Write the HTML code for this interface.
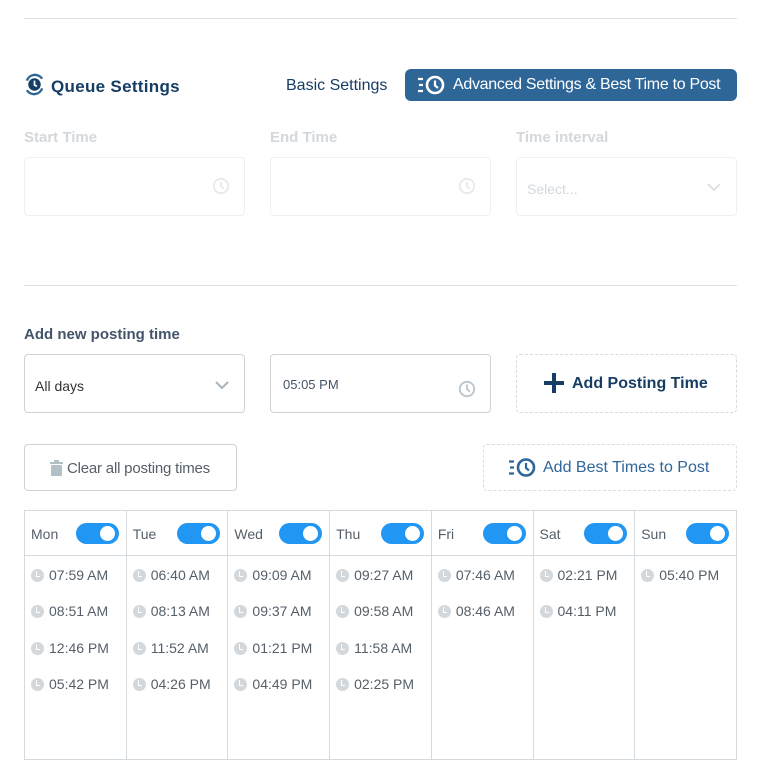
<!DOCTYPE html>
<html><head><style>
*{box-sizing:border-box;margin:0;padding:0}
body{width:760px;height:775px;background:#fff;font-family:"Liberation Sans",sans-serif;position:relative;overflow:hidden;color:#44546a}
.a{position:absolute}
.hr{position:absolute;left:24px;width:713px;height:1px;background:#dde1e5}
.lbl{position:absolute;font-size:15px;color:#d3d8dc;font-weight:bold}
.inp{position:absolute;border:1px solid #eef0f2;border-radius:4px;height:59px;width:221px;top:157px}
.clk{position:absolute;width:18px;height:18px}
table{position:absolute;left:24px;top:510px;width:713px;border-collapse:collapse}
td{border:1px solid #d5dade;vertical-align:top;width:102px;font-size:14px;color:#555f69}
.h{height:45px;position:relative}
.h span{position:absolute;left:6px;top:15px}
.tg{position:absolute;right:7px;top:12px;width:43px;height:21px;border-radius:11px;background:#2196f3}
.tg:after{content:"";position:absolute;right:4px;top:3px;width:15px;height:15px;border-radius:50%;background:#fff}
.b{height:204px;padding-top:11px}
.t{height:36.4px;padding-left:6px;display:flex;align-items:flex-start;gap:5px}
.t i{display:inline-block;width:13px;height:13px;border-radius:50%;background:#d3d8dc;position:relative;margin-top:2px}
.t i:after{content:"";position:absolute;left:5px;top:2px;width:3px;height:5px;border-left:1.5px solid #fff;border-bottom:1.5px solid #fff}
</style></head><body>
<div class="hr" style="top:18px"></div>
<svg class="a" style="left:23px;top:73px" width="23" height="23" viewBox="0 0 24 24"><path d="M4 8A9 9 0 0 1 20 6" stroke="#2e6698" stroke-width="2.5" fill="none"/><path d="M20 16A9 9 0 0 1 4 18" stroke="#2e6698" stroke-width="2.5" fill="none"/><circle cx="12" cy="12" r="6.5" fill="#163d63"/><path d="M12 8v4.5l2.5 1.5" stroke="#fff" stroke-width="1.8" fill="none"/></svg>
<div class="a" style="left:51px;top:77px;font-size:17px;font-weight:bold;color:#163d63;letter-spacing:0.3px">Queue Settings</div>
<div class="a" style="left:286px;top:77px;font-size:16px;color:#163d63">Basic Settings</div>
<div class="a" style="left:405px;top:69px;width:332px;height:32px;border-radius:6px;background:#2e6698;color:#fff;font-size:16px;padding:7px 0 0 48px;letter-spacing:-0.3px;white-space:nowrap">Advanced Settings &amp; Best Time to Post</div>
<svg class="a" style="left:418px;top:75px" width="28" height="20" viewBox="0 0 28 20"><path d="M0 4h5M1 10h4M0 16h5" stroke="#fff" stroke-width="2.2"/><circle cx="17" cy="10" r="8" stroke="#fff" stroke-width="2.6" fill="none"/><path d="M17 5.5v5l3 2.5" stroke="#fff" stroke-width="2.2" fill="none"/></svg>
<div class="lbl" style="left:24px;top:129px">Start Time</div>
<div class="lbl" style="left:270px;top:129px">End Time</div>
<div class="lbl" style="left:516px;top:129px">Time interval</div>
<div class="inp" style="left:24px"></div>
<div class="inp" style="left:270px"></div>
<div class="inp" style="left:516px"><span class="a" style="left:10px;top:23px;font-size:14px;color:#d3d8dc">Select...</span><svg class="a" style="left:189px;top:24px" width="16" height="10"><path d="M2 2l6 6 6-6" stroke="#dde1e5" stroke-width="2" fill="none"/></svg></div>
<svg class="clk" style="left:212px;top:177px" viewBox="0 0 20 20"><circle cx="10" cy="10" r="8" stroke="#e6e9ec" stroke-width="2" fill="none"/><path d="M10 5v5l3 3" stroke="#e6e9ec" stroke-width="2" fill="none"/></svg>
<svg class="clk" style="left:458px;top:177px" viewBox="0 0 20 20"><circle cx="10" cy="10" r="8" stroke="#e6e9ec" stroke-width="2" fill="none"/><path d="M10 5v5l3 3" stroke="#e6e9ec" stroke-width="2" fill="none"/></svg>
<div class="hr" style="top:285px"></div>
<div class="a" style="left:24px;top:326px;font-size:15px;font-weight:bold;color:#44546a">Add new posting time</div>
<div class="a" style="left:24px;top:354px;width:221px;height:59px;border:1px solid #ccd3d9;border-radius:4px"><span class="a" style="left:10px;top:23px;font-size:14px;color:#333">All days</span><svg class="a" style="left:189px;top:25px" width="16" height="10"><path d="M2 2l6 6 6-6" stroke="#aab4bd" stroke-width="2" fill="none"/></svg></div>
<div class="a" style="left:270px;top:354px;width:221px;height:59px;border:1px solid #ccd3d9;border-radius:4px"><span class="a" style="left:12px;top:22px;font-size:13px;color:#44546a">05:05 PM</span></div>
<svg class="clk" style="left:458px;top:380px" viewBox="0 0 20 20"><circle cx="10" cy="10" r="8" stroke="#b8c4cc" stroke-width="2" fill="none"/><path d="M10 5v5l3 3" stroke="#b8c4cc" stroke-width="2" fill="none"/></svg>
<div class="a" style="left:516px;top:354px;width:221px;height:59px;border:1px dashed #d5dade;border-radius:4px"></div>
<svg class="a" style="left:543px;top:372px" width="22" height="22"><path d="M11 1v20M1 11h20" stroke="#163d63" stroke-width="4"/></svg>
<div class="a" style="left:572px;top:375px;font-size:16px;font-weight:bold;color:#163d63">Add Posting Time</div>
<div class="a" style="left:24px;top:444px;width:213px;height:47px;border:1px solid #ccd3d9;border-radius:4px"></div>
<svg class="a" style="left:50px;top:460px" width="13" height="16"><rect x="0" y="2" width="13" height="2" fill="#b4c0c8"/><rect x="4" y="0" width="5" height="2" fill="#b4c0c8"/><rect x="1" y="5" width="11" height="11" rx="1" fill="#b4c0c8"/></svg>
<div class="a" style="left:67px;top:460px;font-size:15px;color:#555f69;letter-spacing:-0.2px">Clear all posting times</div>
<div class="a" style="left:483px;top:444px;width:254px;height:47px;border:1px dashed #d5dde6;border-radius:4px"></div>
<svg class="a" style="left:509px;top:457px" width="28" height="21" viewBox="0 0 28 20"><path d="M0 4h5M1 10h4M0 16h5" stroke="#2e6698" stroke-width="2.2"/><circle cx="17" cy="10" r="8" stroke="#2e6698" stroke-width="2.6" fill="none"/><path d="M17 5.5v5l3 2.5" stroke="#2e6698" stroke-width="2.2" fill="none"/></svg>
<div class="a" style="left:543px;top:459px;font-size:16px;color:#2e6698">Add Best Times to Post</div>
<table><tr>
<td class="h"><span>Mon</span><div class="tg"></div></td>
<td class="h"><span>Tue</span><div class="tg"></div></td>
<td class="h"><span>Wed</span><div class="tg"></div></td>
<td class="h"><span>Thu</span><div class="tg"></div></td>
<td class="h"><span>Fri</span><div class="tg"></div></td>
<td class="h"><span>Sat</span><div class="tg"></div></td>
<td class="h"><span>Sun</span><div class="tg"></div></td>
</tr><tr>
<td class="b"><div class="t"><i></i>07:59 AM</div><div class="t"><i></i>08:51 AM</div><div class="t"><i></i>12:46 PM</div><div class="t"><i></i>05:42 PM</div></td>
<td class="b"><div class="t"><i></i>06:40 AM</div><div class="t"><i></i>08:13 AM</div><div class="t"><i></i>11:52 AM</div><div class="t"><i></i>04:26 PM</div></td>
<td class="b"><div class="t"><i></i>09:09 AM</div><div class="t"><i></i>09:37 AM</div><div class="t"><i></i>01:21 PM</div><div class="t"><i></i>04:49 PM</div></td>
<td class="b"><div class="t"><i></i>09:27 AM</div><div class="t"><i></i>09:58 AM</div><div class="t"><i></i>11:58 AM</div><div class="t"><i></i>02:25 PM</div></td>
<td class="b"><div class="t"><i></i>07:46 AM</div><div class="t"><i></i>08:46 AM</div></td>
<td class="b"><div class="t"><i></i>02:21 PM</div><div class="t"><i></i>04:11 PM</div></td>
<td class="b"><div class="t"><i></i>05:40 PM</div></td>
</tr></table>
</body></html>
